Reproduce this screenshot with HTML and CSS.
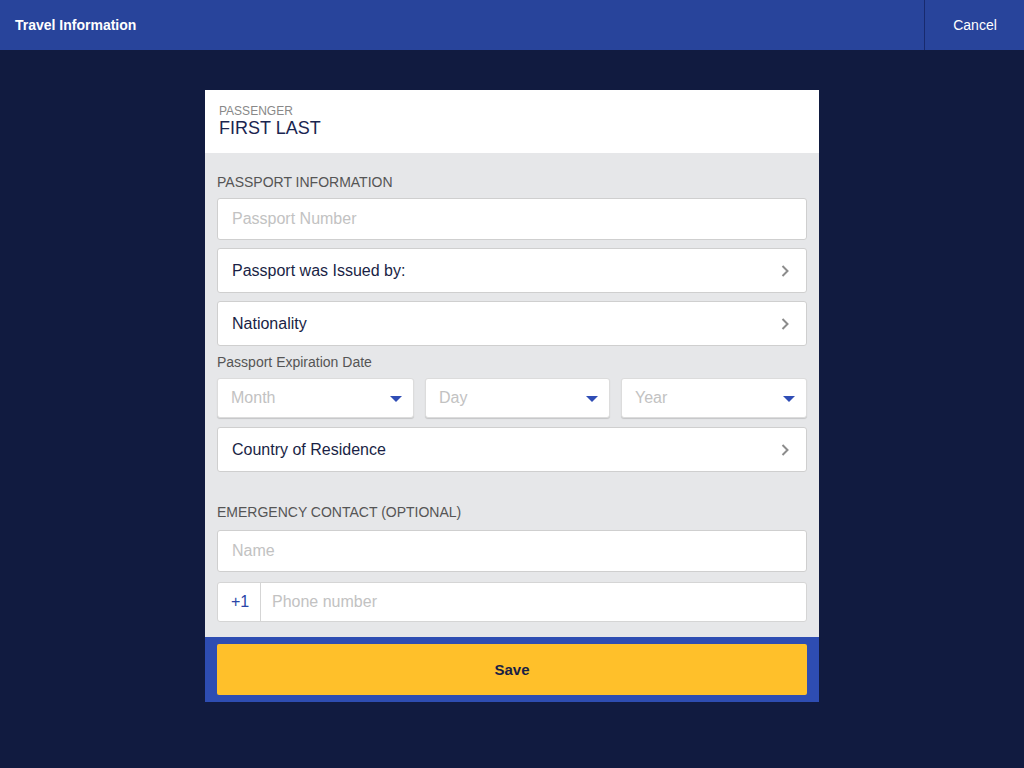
FILE: index.html
```html
<!DOCTYPE html>
<html lang="en">
<head>
<meta charset="utf-8">
<title>Travel Information</title>
<link rel="stylesheet" href="styles.css">
</head>
<body>
<header class="topbar">
  <div class="topbar-title">Travel Information</div>
  <button class="topbar-cancel" type="button">Cancel</button>
</header>
<main class="page">
  <section class="card">
    <div class="passenger">
      <div class="passenger-label">PASSENGER</div>
      <div class="passenger-name">FIRST LAST</div>
    </div>
    <div class="form">
      <h2 class="section-title">PASSPORT INFORMATION</h2>
      <div class="field input-field placeholder">Passport Number</div>
      <div class="field picker">
        <span>Passport was Issued by:</span>
        <svg class="chev" width="8" height="12" viewBox="0 0 8 12"><path d="M1.5 1 L6.5 6 L1.5 11" fill="none" stroke="#8c8c8c" stroke-width="2"/></svg>
      </div>
      <div class="field picker">
        <span>Nationality</span>
        <svg class="chev" width="8" height="12" viewBox="0 0 8 12"><path d="M1.5 1 L6.5 6 L1.5 11" fill="none" stroke="#8c8c8c" stroke-width="2"/></svg>
      </div>
      <div class="sub-label">Passport Expiration Date</div>
      <div class="date-row">
        <div class="select"><span>Month</span><i class="caret"></i></div>
        <div class="select"><span>Day</span><i class="caret"></i></div>
        <div class="select"><span>Year</span><i class="caret"></i></div>
      </div>
      <div class="field picker">
        <span>Country of Residence</span>
        <svg class="chev" width="8" height="12" viewBox="0 0 8 12"><path d="M1.5 1 L6.5 6 L1.5 11" fill="none" stroke="#8c8c8c" stroke-width="2"/></svg>
      </div>
      <h2 class="section-title emergency">EMERGENCY CONTACT (OPTIONAL)</h2>
      <div class="field input-field placeholder name">Name</div>
      <div class="phone">
        <div class="phone-code">+1</div>
        <div class="phone-input">Phone number</div>
      </div>
    </div>
    <div class="footer">
      <button class="save" type="button">Save</button>
    </div>
  </section>
</main>
</body>
</html>
```
FILE: styles.css
```css
* { box-sizing: border-box; }
html, body { margin: 0; padding: 0; }
body {
  background: #111b40;
  font-family: "Liberation Sans", Arial, sans-serif;
  width: 1024px;
  height: 768px;
  overflow: hidden;
}
.topbar {
  height: 50px;
  background: #28449b;
  display: flex;
  align-items: stretch;
  justify-content: space-between;
}
.topbar-title {
  color: #fff;
  font-weight: bold;
  font-size: 14px;
  padding-left: 15px;
  display: flex;
  align-items: center;
}
.topbar-cancel {
  width: 100px;
  border: 0;
  border-left: 1px solid #182a6e;
  background: transparent;
  color: #fff;
  font-family: inherit;
  font-size: 14px;
  padding: 0 0 0 1px;
}
.page {
  padding-top: 40px;
  display: flex;
  justify-content: center;
}
.card {
  width: 614px;
}
.passenger {
  background: #fff;
  padding: 15px 14px 14px;
}
.passenger-label {
  font-size: 12px;
  line-height: 13px;
  color: #888;
}
.passenger-name {
  font-size: 18px;
  line-height: 21px;
  color: #1a2550;
}
.form {
  background: #e6e7e9;
  padding: 20px 12px 15px;
}
.section-title {
  margin: 0 0 7px;
  font-size: 14px;
  line-height: 18px;
  font-weight: normal;
  color: #555;
}
.section-title.emergency {
  margin-top: 31px;
  margin-bottom: 9px;
}
.field {
  background: #fff;
  border: 1px solid #cfcfcf;
  border-radius: 3px;
  font-size: 16px;
  color: #1a1f45;
  padding: 0 14px;
  display: flex;
  align-items: center;
  margin-bottom: 8px;
}
.input-field { height: 42px; }
.input-field.name { margin-bottom: 10px; }
.placeholder { color: #c2c2c2; }
.picker {
  height: 45px;
  justify-content: space-between;
  padding-right: 17px;
}
.chev { display: block; }
.sub-label {
  font-size: 14px;
  line-height: 16px;
  color: #555;
  margin-bottom: 8px;
}
.date-row {
  display: grid;
  grid-template-columns: 197px 185px 1fr;
  column-gap: 11px;
  margin-bottom: 9px;
}
.select {
  height: 40px;
  background: #fff;
  border: 1px solid #dcdcdc;
  border-radius: 3px;
  box-shadow: 0 1px 1px rgba(0,0,0,0.15);
  display: flex;
  align-items: center;
  justify-content: space-between;
  padding: 0 11px 0 13px;
  font-size: 16px;
  color: #c2c2c2;
}
.caret {
  width: 0;
  height: 0;
  border-left: 6px solid transparent;
  border-right: 6px solid transparent;
  border-top: 6px solid #2f4db5;
  margin-top: 2px;
}
.phone {
  height: 40px;
  background: #fff;
  border: 1px solid #d5d5d5;
  border-radius: 3px;
  display: flex;
  align-items: stretch;
  font-size: 16px;
}
.phone-code {
  width: 43px;
  border-right: 1px solid #d5d5d5;
  color: #2a45a8;
  display: flex;
  align-items: center;
  justify-content: center;
  padding-left: 2px;
}
.phone-input {
  color: #c2c2c2;
  display: flex;
  align-items: center;
  padding-left: 11px;
}
.footer {
  background: #2e4db2;
  padding: 7px 12px;
}
.save {
  width: 100%;
  height: 51px;
  border: 0;
  border-radius: 2px;
  background: #ffc02a;
  color: #1a1f45;
  font-family: inherit;
  font-weight: bold;
  font-size: 15px;
  display: block;
}
```
